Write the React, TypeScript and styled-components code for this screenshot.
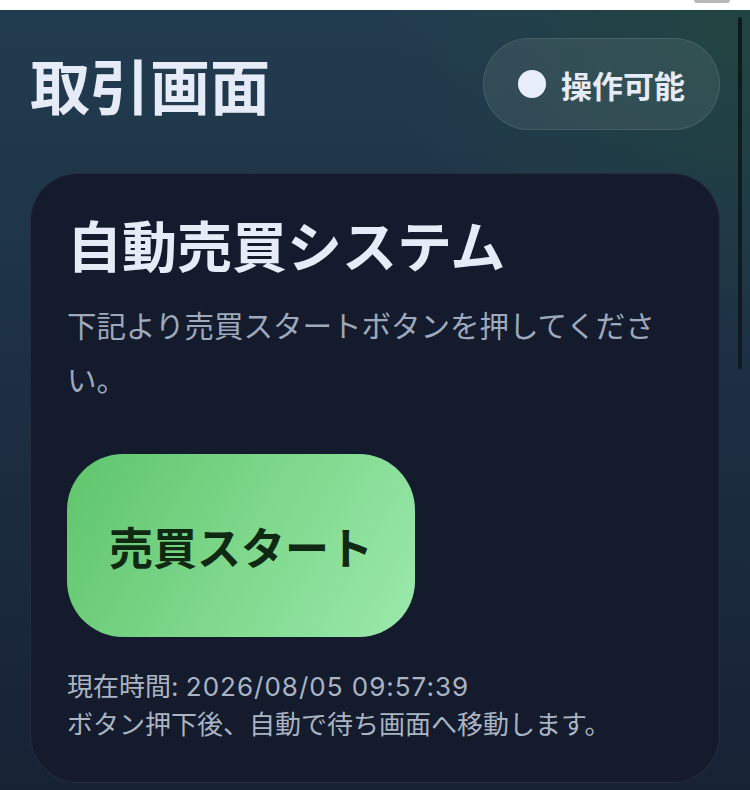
import React from 'react'
import styled, { createGlobalStyle } from 'styled-components'

const GlobalStyle = createGlobalStyle`
  html, body {
    margin: 0;
    padding: 0;
    background: #ffffff;
  }
  body {
    font-family: Inter, "Noto Sans CJK JP", sans-serif;
  }
  * {
    box-sizing: border-box;
  }
`

const Frame = styled.div`
  position: relative;
  width: 750px;
  height: 790px;
  overflow: hidden;
  display: flex;
  flex-direction: column;
`

const TopStrip = styled.div`
  height: 10px;
  flex-shrink: 0;
  background: #ffffff;
  display: flex;
  justify-content: flex-end;
  padding-right: 20px;
`

const StripTab = styled.div`
  width: 36px;
  height: 3px;
  border-radius: 0 0 3px 3px;
  background: #b8b8b8;
`

const Screen = styled.main`
  flex: 1;
  padding: 28px 30px 0;
  background:
    radial-gradient(ellipse 70% 60% at 100% 0%, rgba(33, 70, 64, 0.9), rgba(33, 70, 64, 0) 70%),
    linear-gradient(180deg, #223c4f 0%, #1d3043 45%, #172235 100%);
`

const ScrollThumb = styled.div`
  position: absolute;
  top: 17px;
  right: 8px;
  width: 4px;
  height: 352px;
  border-radius: 2px;
  background: #0f1a1f;
`

const Header = styled.header`
  display: flex;
  justify-content: space-between;
  align-items: center;
`

const PageTitle = styled.h1`
  margin: 0;
  font-family: "Noto Sans CJK JP", sans-serif;
  font-size: 60px;
  font-weight: 700;
  line-height: 1.2;
  color: #e6ecf7;
`

const StatusPill = styled.div`
  height: 92px;
  display: flex;
  align-items: center;
  gap: 15px;
  padding: 0 34px;
  border-radius: 46px;
  background: rgba(255, 255, 255, 0.08);
  border: 1px solid rgba(255, 255, 255, 0.1);
  font-size: 31px;
  font-weight: 700;
  color: #e6ecf7;
`

const Dot = styled.span`
  width: 28px;
  height: 28px;
  border-radius: 50%;
  background: #e8eefa;
`

const Card = styled.section`
  margin-top: 43px;
  padding: 38px 36px;
  border-radius: 48px;
  background: #131b2d;
  border: 1px solid rgba(255, 255, 255, 0.08);
`

const CardTitle = styled.h2`
  margin: 0;
  font-family: "Noto Sans CJK JP", sans-serif;
  font-size: 55px;
  font-weight: 700;
  line-height: 62px;
  color: #e6ecf7;
`

const Lead = styled.p`
  margin: 25px 0 0;
  font-size: 29.5px;
  line-height: 54px;
  color: #9ea9bb;
`

const StartButton = styled.button`
  margin-top: 47px;
  height: 183px;
  padding: 0 42px;
  border: none;
  border-radius: 56px;
  background: linear-gradient(120deg, #5fc56c 0%, #7ed78b 50%, #9be9ac 100%);
  font-family: "Noto Sans CJK JP", sans-serif;
  font-size: 44px;
  font-weight: 700;
  color: #0f2912;
  cursor: pointer;
`

const Footer = styled.div`
  margin-top: 31px;
  font-size: 26px;
  line-height: 38px;
  color: #aab4c3;
`

const Clock = styled.span`
  letter-spacing: 1px;
`

export default function App() {
  return (
    <Frame>
      <GlobalStyle />
      <TopStrip>
        <StripTab />
      </TopStrip>
      <Screen>
        <Header>
          <PageTitle>取引画面</PageTitle>
          <StatusPill>
            <Dot />
            操作可能
          </StatusPill>
        </Header>
        <Card>
          <CardTitle>自動売買システム</CardTitle>
          <Lead>下記より売買スタートボタンを押してください。</Lead>
          <StartButton>売買スタート</StartButton>
          <Footer>
            <div>
              現在時間: <Clock>2026/08/05 09:57:39</Clock>
            </div>
            <div>ボタン押下後、自動で待ち画面へ移動します。</div>
          </Footer>
        </Card>
      </Screen>
      <ScrollThumb />
    </Frame>
  )
}
